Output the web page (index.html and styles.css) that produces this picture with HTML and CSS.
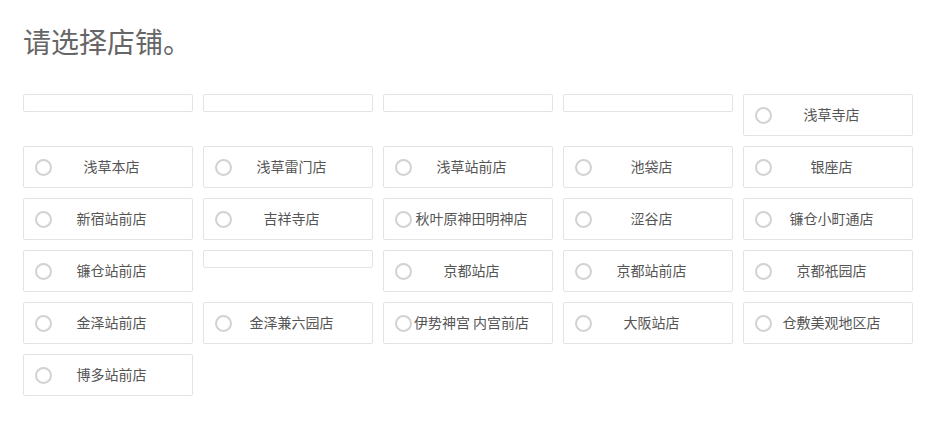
FILE: index.html
```html
<!DOCTYPE html>
<html lang="zh-CN">
<head>
  <meta charset="UTF-8" />
  <title>请选择店铺</title>
  <link rel="stylesheet" href="styles.css">
</head>
<body>
  <div class="page">
    <h1 class="title">请选择店铺。</h1>
    <div class="shop-list">
      <div class="shop empty"></div>
      <div class="shop empty"></div>
      <div class="shop empty"></div>
      <div class="shop empty"></div>
      <label class="shop"><span class="radio"></span><span class="name">浅草寺店</span></label>

      <label class="shop"><span class="radio"></span><span class="name">浅草本店</span></label>
      <label class="shop"><span class="radio"></span><span class="name">浅草雷门店</span></label>
      <label class="shop"><span class="radio"></span><span class="name">浅草站前店</span></label>
      <label class="shop"><span class="radio"></span><span class="name">池袋店</span></label>
      <label class="shop"><span class="radio"></span><span class="name">银座店</span></label>

      <label class="shop"><span class="radio"></span><span class="name">新宿站前店</span></label>
      <label class="shop"><span class="radio"></span><span class="name">吉祥寺店</span></label>
      <label class="shop"><span class="radio"></span><span class="name">秋叶原神田明神店</span></label>
      <label class="shop"><span class="radio"></span><span class="name">涩谷店</span></label>
      <label class="shop"><span class="radio"></span><span class="name">镰仓小町通店</span></label>

      <label class="shop"><span class="radio"></span><span class="name">镰仓站前店</span></label>
      <div class="shop empty"></div>
      <label class="shop"><span class="radio"></span><span class="name">京都站店</span></label>
      <label class="shop"><span class="radio"></span><span class="name">京都站前店</span></label>
      <label class="shop"><span class="radio"></span><span class="name">京都祇园店</span></label>

      <label class="shop"><span class="radio"></span><span class="name">金泽站前店</span></label>
      <label class="shop"><span class="radio"></span><span class="name">金泽兼六园店</span></label>
      <label class="shop"><span class="radio"></span><span class="name">伊势神宫 内宫前店</span></label>
      <label class="shop"><span class="radio"></span><span class="name">大阪站店</span></label>
      <label class="shop"><span class="radio"></span><span class="name">仓敷美观地区店</span></label>

      <label class="shop"><span class="radio"></span><span class="name">博多站前店</span></label>
    </div>
  </div>
</body>
</html>
```

FILE: styles.css
```css
body {
  margin: 0;
  background: #fff;
  font-family: "Noto Sans CJK SC", "Noto Sans", sans-serif;
  color: #555;
}
.page {
  padding: 18px 0 0 23px;
}
.title {
  margin: 0 0 30px 0;
  font-size: 28px;
  font-weight: 400;
  line-height: 46px;
  color: #666;
}
.shop-list {
  width: 900px;
  display: flex;
  flex-wrap: wrap;
  align-items: flex-start;
  gap: 10px;
}
.shop {
  width: 170px;
  height: 42px;
  box-sizing: border-box;
  border: 1px solid #e3e3e3;
  border-radius: 2px;
  display: flex;
  align-items: center;
  padding: 0 21px 0 11px;
  cursor: pointer;
}
.shop.empty {
  height: 18px;
}
.radio {
  width: 17px;
  height: 17px;
  box-sizing: border-box;
  border: 2px solid #d2d2d2;
  border-radius: 50%;
  flex-shrink: 0;
}
.name {
  flex: 1;
  text-align: center;
  font-size: 14px;
  line-height: 20px;
  padding-bottom: 3px;
  color: #555;
  white-space: nowrap;
}
```
